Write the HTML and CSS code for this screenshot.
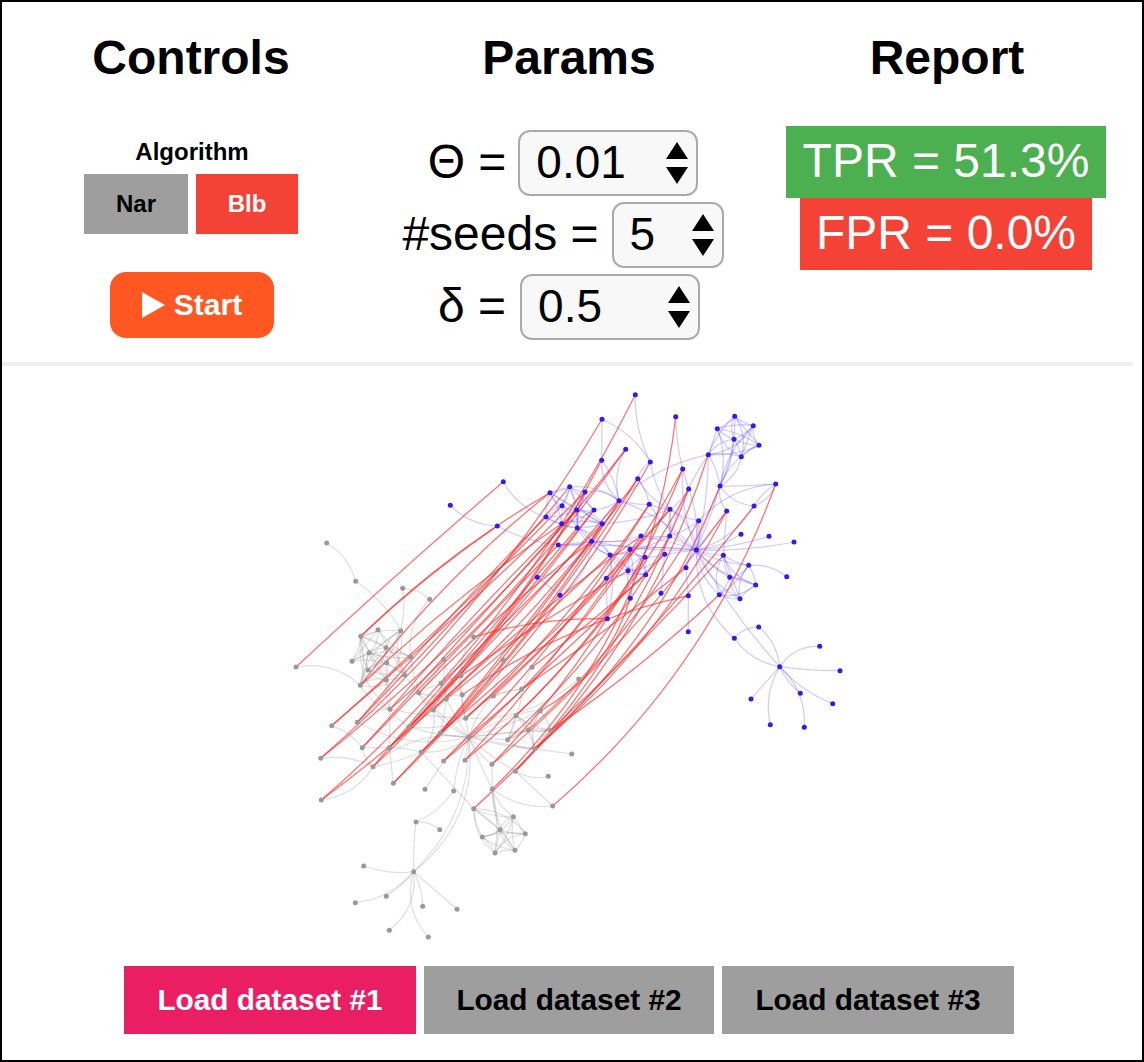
FILE: index.html
```html
<!DOCTYPE html>
<html lang="en">
<head>
<meta charset="utf-8">
<title>Graph matching demo</title>
<link rel="stylesheet" href="styles.css">
</head>
<body>
<div class="app">
  <div class="main">
    <header class="panel">
      <section class="col">
        <h1 class="title">Controls</h1>
        <div class="algo-label">Algorithm</div>
        <div class="algo-row">
          <button class="algo algo-nar">Nar</button>
          <button class="algo algo-blb">Blb</button>
        </div>
        <button class="start">
          <svg class="start-icon" viewBox="0 0 23 26" width="23" height="26"><polygon points="0,0 23,13 0,26"/></svg>
          <span>Start</span>
        </button>
      </section>
      <section class="col">
        <h1 class="title">Params</h1>
        <div class="params">
          <div class="param param-trailing">
            <span class="param-label">Θ =</span>
            <div class="select-wrap">
              <select class="select select-wide"><option>0.01</option><option>0.05</option></select>
              <svg class="arrows" viewBox="0 0 22 42" width="22" height="42"><polygon points="0,17 11,0 22,17"/><polygon points="0,25 22,25 11,42"/></svg>
            </div>
          </div>
          <div class="param param-trailing param-seeds">
            <span class="param-label">#seeds =</span>
            <div class="select-wrap">
              <select class="select select-narrow"><option>5</option><option>10</option></select>
              <svg class="arrows" viewBox="0 0 22 42" width="22" height="42"><polygon points="0,17 11,0 22,17"/><polygon points="0,25 22,25 11,42"/></svg>
            </div>
          </div>
          <div class="param param-delta">
            <span class="param-label">δ =</span>
            <div class="select-wrap">
              <select class="select select-wide"><option>0.5</option><option>0.1</option></select>
              <svg class="arrows" viewBox="0 0 22 42" width="22" height="42"><polygon points="0,17 11,0 22,17"/><polygon points="0,25 22,25 11,42"/></svg>
            </div>
          </div>
        </div>
      </section>
      <section class="col">
        <h1 class="title">Report</h1>
        <div class="report">
          <div class="stat stat-good">TPR = 51.3%</div>
          <div class="stat stat-bad">FPR = 0.0%</div>
        </div>
      </section>
    </header>
    <hr class="divider">
    <svg id="graph" class="graph" viewBox="2 366 1134 600" width="1134" height="600"></svg>
    <footer class="datasets">
      <button class="dataset dataset-active">Load dataset #1</button>
      <button class="dataset">Load dataset #2</button>
      <button class="dataset">Load dataset #3</button>
    </footer>
  </div>
</div>
<script src="graph.js"></script>
</body>
</html>
```
FILE: styles.css
```css
* { box-sizing: border-box; }
html, body { margin: 0; padding: 0; background: #fff; }
body { font-family: "Liberation Sans", Arial, sans-serif; color: #000; }
.app { width: 1144px; height: 1062px; border: 2px solid #000; overflow: hidden; }
.main { width: 1134px; }
.panel { display: grid; grid-template-columns: repeat(3, 378px); height: 360px; }
.col { display: flex; flex-direction: column; align-items: center; padding-top: 28px; }
.title { margin: 0; font-size: 48px; line-height: 55px; font-weight: 700; }
.algo-label { margin-top: 53px; padding-left: 2px; font-size: 24px; line-height: 28px; font-weight: 700; }
.algo-row { display: flex; gap: 8px; margin-top: 8px; }
button { border: 0; padding: 0; font-family: inherit; font-weight: 700; }
.algo { height: 60px; font-size: 24px; }
.algo-nar { width: 104px; background: #9e9e9e; color: #000; }
.algo-blb { width: 102px; background: #f44336; color: #fff; }
.start { display: flex; align-items: center; justify-content: center; gap: 9px; width: 164px; height: 66px; margin: 38px 0 0 2px; border-radius: 16px; background: #ff5722; color: #fff; font-size: 30px; }
.start-icon { fill: #fff; }
.params { display: flex; flex-direction: column; align-items: center; gap: 6px; margin-top: 45px; }
.param { display: flex; align-items: center; gap: 12px; height: 66px; font-size: 48px; }
.param-trailing { padding-right: 12px; }
.param-seeds { gap: 13px; }
.param-delta { gap: 14px; }
.param-label { padding-bottom: 4px; }
.select-wrap { position: relative; }
.select { display: block; appearance: none; -webkit-appearance: none; height: 66px; padding: 0 0 2px 16px; border: 2px solid #aaa; border-radius: 12px; background: #f8f8f8; color: #000; font-family: inherit; font-size: 46px; }
.select-wide { width: 180px; }
.select-narrow { width: 112px; }
.arrows { position: absolute; top: 12px; right: 10px; fill: #000; pointer-events: none; }
.report { display: flex; flex-direction: column; align-items: center; margin-top: 41px; padding-right: 2px; }
.stat { height: 72px; padding: 0 17px; font-size: 48px; line-height: 70px; color: #fff; white-space: nowrap; }
.stat-good { background: #4caf50; }
.stat-bad { padding: 0 16px; background: #f44336; }
.divider { width: 1131px; height: 4px; margin: 0; border: 0; background: #eee; }
.graph { display: block; }
.edge { fill: none; stroke-width: 1.25; }
.edge-gray { stroke: rgba(140, 140, 140, 0.27); }
.edge-blue { stroke: rgba(60, 40, 255, 0.24); }
.edge-red { stroke: rgba(255, 40, 40, 0.66); }
.node-gray { fill: #999; }
.node-blue { fill: #3318f0; }
.datasets { display: flex; justify-content: center; gap: 8px; }
.dataset { width: 290px; height: 68px; background: #9e9e9e; color: #000; font-size: 29.8px; }
.dataset:first-child, .dataset:last-child { width: 292px; }
.dataset-active { background: #e91e63; color: #fff; }
```
FILE: graph.js
```js
var BLUE = [[635.3,394.7],[675.7,416.7],[602,419.3],[734.7,416.3],[753.3,425.7],[717.3,428.7],[734,439.3],[759,445.3],[741.3,456.7],[708.3,454.7],[625.7,449.3],[601.7,460.3],[650.3,462],[682.7,469],[637.7,478.7],[720,486],[775.7,484],[688.7,489],[503.3,481.7],[450.3,505.3],[550,492.7],[569.7,486.7],[585,492],[562,505.7],[576.7,510],[594,510],[546,517],[561.7,523.7],[577.3,528],[602.3,523.7],[619,500.7],[649.3,504.3],[670,509.3],[726.7,511],[754,506],[698.7,520.7],[497.3,526],[558.3,545],[591.7,541.3],[641,536],[669.7,536],[741,534.3],[769,536.3],[794,542],[696.3,550],[723.3,555.3],[748.7,565.3],[610,555],[630,549.3],[645,557.3],[664.7,554.3],[686,567.7],[628,570.7],[645.7,574.7],[606.3,578.3],[537.3,577.3],[729.7,577.3],[786.7,576.7],[755.7,585],[560,595.3],[630.3,598.3],[661,593.3],[688.3,595.7],[719.3,594.7],[740,598.7],[607.3,618.7],[688.3,631.7],[758.7,627],[734.3,638.3],[779.7,666.7],[819.7,646.3],[840,670.7],[800.3,693.3],[832.7,703.7],[751,699],[770.3,724.7],[804.3,727.3]];
var GRAY = [[326.7,543],[355.7,581.3],[402.7,588.3],[429.7,599.3],[378,629.7],[400.7,630.7],[360.7,636.3],[473.7,637],[386,647.7],[369,652.7],[410.7,657],[443.7,659.3],[503,659.7],[352,661.3],[386.7,662.7],[296,667],[532,667.3],[368,670],[404.7,675],[461,675.7],[386.3,680],[578.7,679],[441,683.3],[360.3,685.3],[521.7,689],[418.7,693],[462.3,694.7],[493.3,696],[446.3,699],[390,709.3],[433.3,710],[540.3,711],[516,715.7],[465.7,718.3],[357.3,722.3],[331.7,725.7],[409.3,726.7],[528.3,730],[550.7,730.3],[440.3,733],[468.7,737],[507.7,739.7],[362.3,747.7],[389.3,747.7],[534.7,748.7],[421.3,752],[571.7,754],[320.7,758.3],[443.7,761],[465,760.3],[492,764.3],[373,766.7],[515.3,771.3],[548.3,776.3],[393.3,783.3],[425,789.3],[453.7,791],[492.3,789],[321.3,800],[552.7,806],[473.7,808.7],[513.3,816.7],[416,822],[439.7,829.7],[500,829.7],[525.3,833.7],[482.3,837],[515,850.3],[495,853],[413.7,871.7],[363.7,866],[386.3,896.3],[355.3,902.7],[422.7,906.3],[457,909.3],[389.3,930.3],[428.3,937]];

var BLUE_CLIQUES = [[3,4,5,6,7,8,9],[20,21,22,23,24,25,26,27,28,29],[45,46,56,58,63,64],[47,48,49,52,53]];
var BLUE_EDGES = "0-12:.06 2-11:0 2-12:-.08 1-13:.03 11-30:.12 10-30:.1 12-14:.1 12-32:.06 14-32:.08 14-31 13-44:.06 13-17 17-44 19-36:.1 18-26:.1 36-37:.05 37-38:0 37-27 55-59:0 55-38:.12 59-38:.12 54-47 65-47:.06 65-54 44-15:.02 44-33 44-34:.1 44-35 44-40:0 44-41:.06 44-42:.03 44-43:.03 44-45:.04 44-46:.06 44-56:.05 44-58:.08 44-63:.1 44-64:.1 44-50:0 44-51:.1 44-32 44-31 44-30 44-39:.02 44-48:.03 44-68:.12 44-69:.03 44-9:.03 15-5:.08 15-3:.06 15-6 15-4:-.08 15-7:-.1 15-8 15-9:.05 15-16:.01 15-33 15-34:.12 15-44:.02 16-34:-.12 16-35:.1 33-45:0 9-30:.07 62-51 62-66:0 51-35:.04 68-67:-.12 69-67:.1 69-68:-.1 57-46:.1 69-70:-.14 69-71:.02 69-72:.06 69-73:.06 69-74:0 69-75:.1 69-76:-.12 30-31:.04 31-32:.04 30-38:.06 38-39:.05 38-40:.03 39-40:.02 38-47:.1 28-38 28-47:.1 25-30:.06 29-30:.06 29-38 22-30:-.12 20-30:-.14 48-39 50-40 50-61:0 49-50 48-60 49-60 52-60:.04 53-54:.05 35-32 40-32:.03 34-16 44-37:.01 38-44:.03 47-40:.05 52-50:.1 40-35:.05 9-40:.04 32-17:.05 32-40:.03 30-11 47-52:.12 28-47:-.1 38-47:-.1 29-32:.04 37-38:.04 23-38:.04";
var GRAY_CLIQUES = [[4,5,6,8,9,10,13,14,17,18,20,23],[60,61,64,65,66,67,68],[31,32,37,38,41,44]];
var GRAY_EDGES = "0-1:-.1 1-5:-.06 2-3:-.1 2-5:-.05 3-10:.12 15-23:-.12 23-29:.1 20-29:.06 6-29:.14 29-43:0 29-34:.12 29-36:.05 29-33:.02 10-25:.02 18-25:.02 25-40:.02 25-11:.05 25-26:.05 25-28:.03 11-28:.02 11-26:.07 19-22:.04 19-28:.05 19-26:.1 26-33:.05 33-40:0 28-40:.02 30-40:.06 30-28:.03 39-28:.02 39-40:.05 36-33:.08 36-40:.04 45-40:.1 45-30:.12 45-43:.03 45-51:-.03 45-60:0 43-54:0 42-43:0 42-51:.1 35-42:-.08 34-40:.1 47-51:-.08 58-51:.12 51-40:-.12 7-19:.1 12-27:0 27-33:.1 16-24:0 24-27:.04 21-33:-.1 24-33:.1 40-32:-.03 40-31:.02 40-37:0 40-38:-.01 40-41:.01 40-44:.03 40-46:.01 40-52:.03 40-49:0 40-48:.03 40-50:.06 40-57:.01 40-56:.05 40-69:-.14 40-69:-.11 57-50:0 57-59:.1 57-61:.08 57-64:.05 57-68:-.05 57-67:.08 60-57:0 69-62:-.02 62-63:-.1 62-56:.07 55-48:0 69-70:-.06 69-71:-.04 69-72:-.1 69-73:-.06 69-74:0 69-75:-.14 69-76:.14 29-20:.05 22-25:.03 28-22:.04 30-22:.08 25-30:.08 27-40:.06 19-33:.04 32-24:.06 41-32:.04 52-53:.1 52-59:0";
var RED = [[15,18,-.005],[6,36,-.02],[23,20,-.03],[35,23,.01],[34,26,-.01],[47,2,.04],[58,0,.05],[42,37,0],[43,25,.02],[36,30,.01],[54,14,.03],[45,12,.04],[29,10,.03],[51,22,.04],[39,32,.02],[48,13,.05],[49,17,.05],[33,31,.03],[25,38,-.02],[30,39,-.02],[26,62,-.05],[7,65,-.04],[57,1,.09],[50,33,.03],[52,9,.06],[44,15,.06],[38,45,.01],[37,35,.04],[41,40,.04],[60,34,.02],[59,16,.065],[32,49,.03],[24,51,.01],[16,53,.01],[27,48,.02],[40,50,.01],[28,47,.01],[22,29,.01],[19,52,-.01],[31,60,.1],
[34,21,.01],[42,24,0],[43,11,.04],[51,28,0],[36,25,.01],[54,29,.02],[45,30,.03],[47,10,.03],[58,14,.04],[35,22,.01],[29,24,-.01],[48,31,.03],[49,39,.02],[39,38,0],[33,32,.02],[23,27,-.02],[6,20,-.03],[50,13,.05],[52,17,.05],[44,33,.05],[38,63,.02]];

var NS = "http://www.w3.org/2000/svg";
var svg = document.getElementById("graph");

function curve(a, b, bend) {
  var dx = b[0] - a[0], dy = b[1] - a[1];
  var cx = (a[0] + b[0]) / 2 - dy * bend * 2;
  var cy = (a[1] + b[1]) / 2 + dx * bend * 2;
  return "M" + a[0] + " " + a[1] + "Q" + cx.toFixed(1) + " " + cy.toFixed(1) + " " + b[0] + " " + b[1];
}
function add(tag, cls, attrs) {
  var el = document.createElementNS(NS, tag);
  el.setAttribute("class", cls);
  for (var k in attrs) el.setAttribute(k, attrs[k]);
  svg.appendChild(el);
}
function softBend(i, j) {
  return (((i * 7 + j * 13) % 5) - 2) * 0.06;
}
function drawEdges(nodes, list, cliques, cls) {
  list.split(" ").forEach(function (e) {
    var parts = e.split(":"), p = parts[0].split("-").map(Number);
    var bend = parts.length > 1 ? Number(parts[1]) : softBend(p[0], p[1]);
    add("path", "edge " + cls, { d: curve(nodes[p[0]], nodes[p[1]], bend) });
  });
  cliques.forEach(function (c) {
    c.forEach(function (a, i) {
      c.slice(i + 1).forEach(function (b) {
        if (c.length > 8 && (a + b) % 3 === 0) return;
        add("path", "edge " + cls, { d: curve(nodes[a], nodes[b], softBend(a, b)) });
      });
    });
  });
}
drawEdges(GRAY, GRAY_EDGES, GRAY_CLIQUES, "edge-gray");
drawEdges(BLUE, BLUE_EDGES, BLUE_CLIQUES, "edge-blue");
RED.forEach(function (r) {
  add("path", "edge edge-red", { d: curve(GRAY[r[0]], BLUE[r[1]], r[2]) });
});
GRAY.forEach(function (n) { add("circle", "node-gray", { cx: n[0], cy: n[1], r: 2.5 }); });
BLUE.forEach(function (n) { add("circle", "node-blue", { cx: n[0], cy: n[1], r: 2.5 }); });
```
